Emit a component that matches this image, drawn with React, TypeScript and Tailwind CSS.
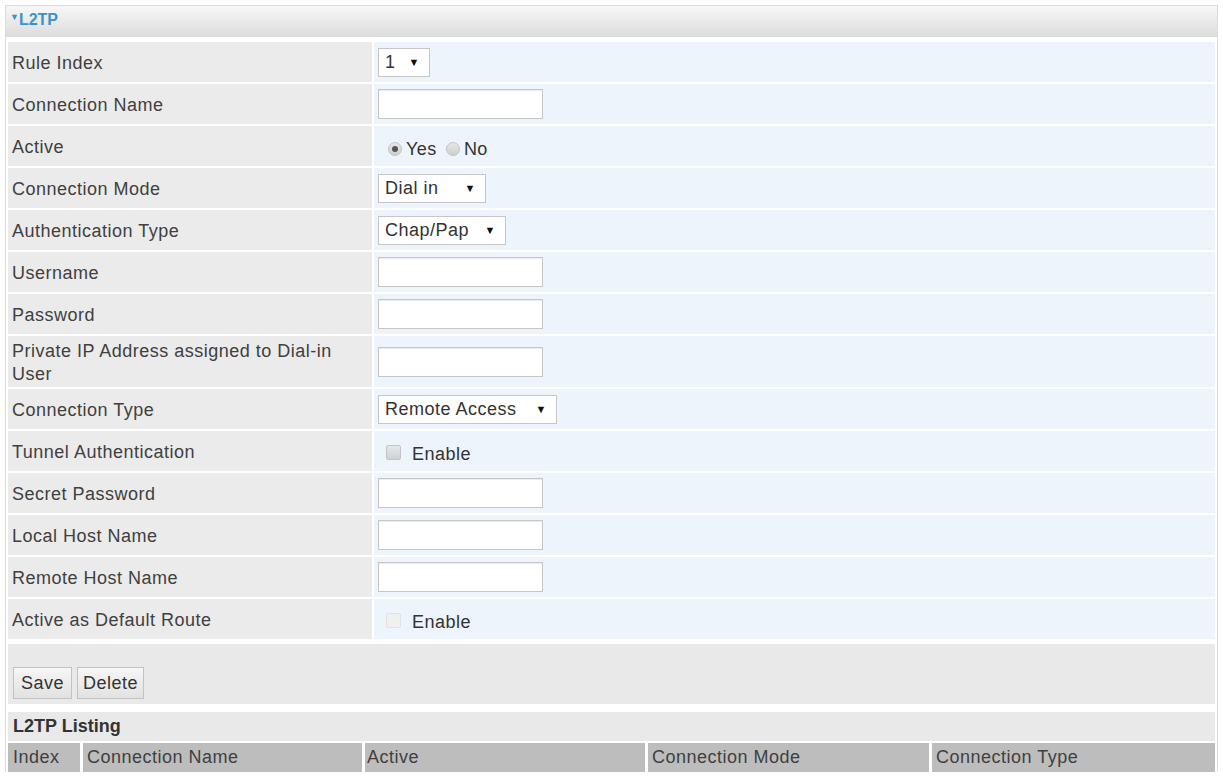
import React from 'react';

const font = { fontFamily: '"Liberation Sans", Arial, sans-serif' };

const TextBox = () => (
  <div className="h-[30px] w-[165px] border border-[#c6c6c6] bg-white shadow-[inset_0_1px_1px_rgba(0,0,0,0.08)]" />
);

const SelectBox = ({ label, width }: { label: string; width: string }) => (
  <div className={`flex h-[29px] ${width} items-center justify-between border border-[#c6c6c6] bg-white pl-[6px] pr-[9px] text-[#333]`}>
    <span>{label}</span>
    <span className="text-[11px] text-[#111]">▼</span>
  </div>
);

const Radio = ({ checked }: { checked?: boolean }) => (
  <span className="flex h-[14px] w-[14px] items-center justify-center rounded-full border border-[#c4c4c4] bg-gradient-to-b from-[#e6e6e6] to-[#cfcfcf]">
    {checked && <span className="h-[6px] w-[6px] rounded-full bg-[#555]" />}
  </span>
);

const Check = ({ disabled }: { disabled?: boolean }) => (
  <span
    className={`mt-[-4px] h-[15px] w-[15px] rounded-[2px] border ${
      disabled ? 'border-[#e2e2e2] bg-[#f0f0f0]' : 'border-[#c4c4c4] bg-gradient-to-b from-[#e8e8ea] to-[#cfd0d6]'
    }`}
  />
);

const Row = ({ label, children, tall }: { label: React.ReactNode; children: React.ReactNode; tall?: boolean }) => (
  <div className={`flex ${tall ? 'h-[51px]' : 'h-[40px]'} gap-[2px]`}>
    <div className="flex w-[364px] shrink-0 items-center bg-[#ebebeb] pl-[4px] pt-[2px] leading-[23px] text-[#404040]">{label}</div>
    <div className="flex flex-1 items-center bg-[#eef4fb] pl-[4px]">{children}</div>
  </div>
);

export default function App() {
  return (
    <div className="min-h-[778px] bg-white p-[5px] pb-0 text-[18px] tracking-[0.5px]" style={font}>
      <div className="border border-b-0 border-[#dcdcdc]">
        <div className="flex h-[31px] items-start bg-gradient-to-b from-[#f7f7f7] to-[#dcdcdc] pl-[4px] pt-[2px] text-[16px] font-semibold tracking-normal text-[#3b92c9]">
          <span className="mt-[3px] text-[9px]">▼</span>
          <span>L2TP</span>
        </div>
        <div className="flex flex-col gap-[2px] bg-white px-[2px] pt-[5px]">
          <Row label="Rule Index">
            <SelectBox label="1" width="w-[52px]" />
          </Row>
          <Row label="Connection Name">
            <TextBox />
          </Row>
          <Row label="Active">
            <div className="flex items-center pl-[10px] pt-[6px] text-[#333]">
              <Radio checked />
              <span className="ml-[4px]">Yes</span>
              <span className="ml-[9px]">
                <Radio />
              </span>
              <span className="ml-[4px]">No</span>
            </div>
          </Row>
          <Row label="Connection Mode">
            <SelectBox label="Dial in" width="w-[108px]" />
          </Row>
          <Row label="Authentication Type">
            <SelectBox label="Chap/Pap" width="w-[128px]" />
          </Row>
          <Row label="Username">
            <TextBox />
          </Row>
          <Row label="Password">
            <TextBox />
          </Row>
          <Row
            tall
            label={
              <span>
                Private IP Address assigned to Dial-in
                <br />
                User
              </span>
            }
          >
            <TextBox />
          </Row>
          <Row label="Connection Type">
            <SelectBox label="Remote Access" width="w-[179px]" />
          </Row>
          <Row label="Tunnel Authentication">
            <div className="flex items-center pl-[8px] pt-[6px] text-[#333]">
              <Check />
              <span className="ml-[11px]">Enable</span>
            </div>
          </Row>
          <Row label="Secret Password">
            <TextBox />
          </Row>
          <Row label="Local Host Name">
            <TextBox />
          </Row>
          <Row label="Remote Host Name">
            <TextBox />
          </Row>
          <Row label="Active as Default Route">
            <div className="flex items-center pl-[8px] pt-[6px] text-[#333]">
              <Check disabled />
              <span className="ml-[11px]">Enable</span>
            </div>
          </Row>
          <div className="mt-[3px] flex h-[60px] items-end gap-[5px] bg-[#e9e9e9] pb-[5px] pl-[5px]">
            <button className="h-[32px] w-[59px] border border-[#c2c2c2] bg-gradient-to-b from-[#f6f6f6] to-[#e2e2e2] text-[#333]">
              Save
            </button>
            <button className="h-[32px] w-[67px] border border-[#c2c2c2] bg-gradient-to-b from-[#f6f6f6] to-[#e2e2e2] text-[#333]">
              Delete
            </button>
          </div>
          <div className="mt-[6px] flex h-[29px] items-center bg-[#e9e9e9] pl-[5px] font-bold tracking-normal text-[#333]">
            L2TP Listing
          </div>
          <div className="flex h-[29px] gap-[3px] text-[#404040]">
            <div className="flex w-[72px] items-center bg-[#bdbdbd] pl-[5px]">Index</div>
            <div className="flex w-[279px] items-center bg-[#bdbdbd] pl-[4px]">Connection Name</div>
            <div className="flex w-[280px] items-center bg-[#bdbdbd] pl-[2px]">Active</div>
            <div className="flex w-[281px] items-center bg-[#bdbdbd] pl-[4px]">Connection Mode</div>
            <div className="flex flex-1 items-center bg-[#bdbdbd] pl-[4px]">Connection Type</div>
          </div>
        </div>
      </div>
    </div>
  );
}
